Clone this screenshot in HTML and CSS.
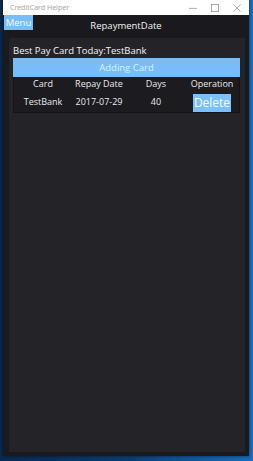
FILE: index.html
```html
<!DOCTYPE html>
<html>
<head>
<meta charset="utf-8">
<link rel="stylesheet" href="styles.css">
</head>
<body>
<div class="window">
  <div class="titlebar">
    <span class="app-title">CreditCard Helper</span>
    <div class="controls">
      <svg width="10" height="10" viewBox="0 0 10 10"><path d="M0 5.5h10" stroke="#9a9a9a" stroke-width="1"/></svg>
      <svg width="10" height="10" viewBox="0 0 10 10"><rect x="0.5" y="0.5" width="9" height="9" fill="none" stroke="#9a9a9a" stroke-width="1"/></svg>
      <svg width="10" height="10" viewBox="0 0 10 10"><path d="M0.5 0.5l9 9M9.5 0.5l-9 9" stroke="#9a9a9a" stroke-width="1"/></svg>
    </div>
  </div>
  <div class="appbar">
    <div class="menu">Menu</div>
    <div class="page-title">RepaymentDate</div>
  </div>
  <div class="panel">
    <div class="best">Best Pay Card Today:TestBank</div>
    <div class="add">Adding Card</div>
    <div class="table">
      <div class="row head">
        <div>Card</div><div>Repay Date</div><div>Days</div><div>Operation</div>
      </div>
      <div class="row data">
        <div>TestBank</div><div>2017-07-29</div><div>40</div><div><span class="delete">Delete</span></div>
      </div>
    </div>
  </div>
</div>
</body>
</html>
```
FILE: styles.css
```css
html, body {
  margin: 0;
  padding: 0;
}
body {
  width: 253px;
  height: 461px;
  overflow: hidden;
  background: linear-gradient(90deg, #0a2a50 0%, #0c3d73 50%, #1a6cc0 100%);
  font-family: "Open Sans", "Noto Sans", sans-serif;
  color: #fff;
}
.window {
  margin-left: 3px;
  width: 246px;
  height: 456px;
  background: #1a191d;
  display: flex;
  flex-direction: column;
  box-shadow: 0 0 3px rgba(0,0,0,0.6);
}
.titlebar {
  height: 15px;
  background: #fff;
  display: flex;
  align-items: center;
  justify-content: space-between;
}
.app-title {
  font-family: "Noto Sans", sans-serif;
  font-size: 7px;
  color: #a8a8a8;
  padding-left: 7px;
}
.controls {
  display: flex;
  gap: 14px;
  padding-right: 8px;
  align-items: center;
}
.controls svg {
  width: 8px;
  height: 8px;
}
.appbar {
  height: 22px;
  position: relative;
  display: flex;
  align-items: flex-start;
  padding-left: 1px;
}
.menu {
  width: 29px;
  height: 15px;
  background: #78bdf8;
  color: #f2f8ff;
  font-size: 9.5px;
  line-height: 15px;
  text-align: center;
}
.page-title {
  position: absolute;
  left: 0;
  right: 0;
  top: 5px;
  text-align: center;
  font-size: 9.5px;
  line-height: 12px;
  color: #f2f2f2;
  pointer-events: none;
}
.panel {
  margin: 1px 4px 4px 6px;
  flex: 1;
  background: #242328;
  padding: 6px 5px 0 4px;
}
.best {
  font-size: 9.5px;
  line-height: 13px;
  color: #f4f4f4;
  margin-bottom: 1px;
}
.add {
  height: 19px;
  background: #78bdfa;
  color: #dcefff;
  font-size: 9.5px;
  line-height: 19px;
  text-align: center;
}
.table {
  height: 36px;
  box-sizing: border-box;
  background: #1c1b1f;
  border: 1px solid #141316;
  border-top: 0;
}
.row {
  display: grid;
  grid-template-columns: 58px 54px 60px 52px;
  text-align: center;
  font-size: 9px;
  color: #eaeaea;
}
.head {
  height: 14px;
  line-height: 14px;
}
.data {
  height: 21px;
  align-items: center;
}
.delete {
  display: inline-block;
  width: 38px;
  height: 18px;
  background: #7cc0fa;
  color: #f6faff;
  font-size: 12px;
  line-height: 18px;
  margin-top: 2px;
}
```
